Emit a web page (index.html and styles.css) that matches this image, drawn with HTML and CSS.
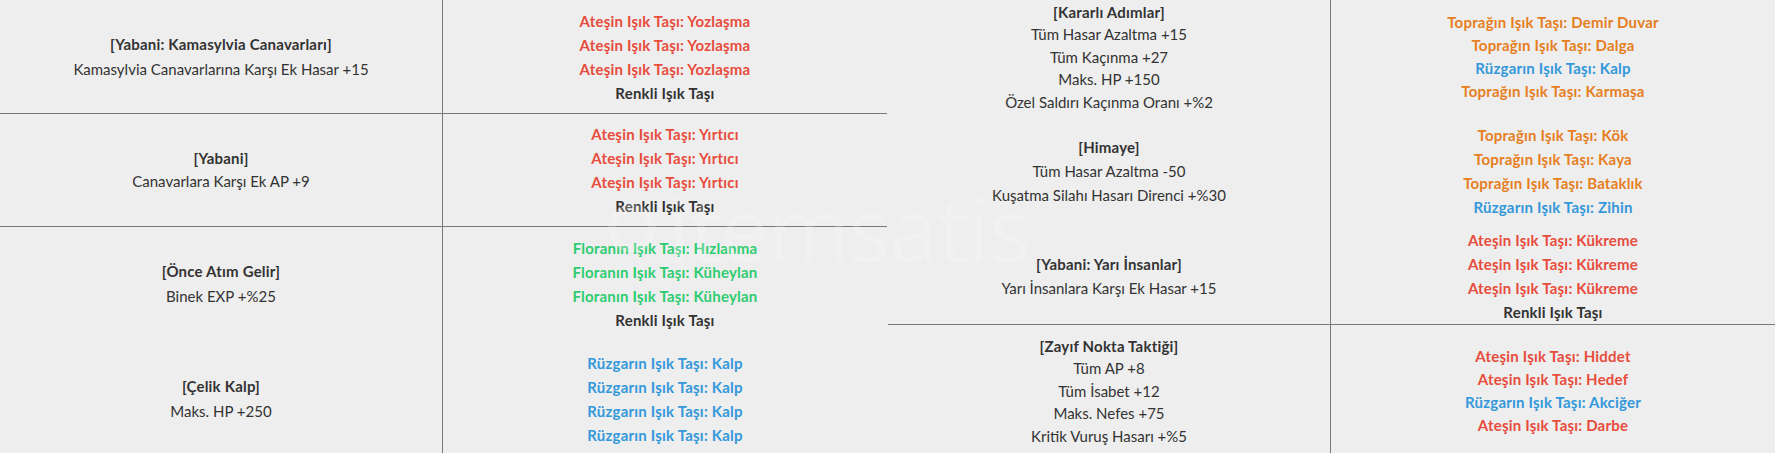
FILE: index.html
```html
<!DOCTYPE html>
<html lang="tr">
<head>
<meta charset="utf-8">
<title>Işık Taşı Kombinasyonları</title>
<link rel="stylesheet" href="styles.css">
</head>
<body>
<div class="page">
  <div class="table">
    <div class="row h114 line">
      <div class="cell c1 two">
        <div class="title">[Yabani: Kamasylvia Canavarları]</div>
        <div>Kamasylvia Canavarlarına Karşı Ek Hasar +15</div>
      </div>
      <div class="cell c2">
        <div class="red">Ateşin Işık Taşı: Yozlaşma</div>
        <div class="red">Ateşin Işık Taşı: Yozlaşma</div>
        <div class="red">Ateşin Işık Taşı: Yozlaşma</div>
        <div class="dark">Renkli Işık Taşı</div>
      </div>
    </div>
    <div class="row h113 line">
      <div class="cell c1 two tight">
        <div class="title">[Yabani]</div>
        <div>Canavarlara Karşı Ek AP +9</div>
      </div>
      <div class="cell c2">
        <div class="red">Ateşin Işık Taşı: Yırtıcı</div>
        <div class="red">Ateşin Işık Taşı: Yırtıcı</div>
        <div class="red">Ateşin Işık Taşı: Yırtıcı</div>
        <div class="dark">Renkli Işık Taşı</div>
      </div>
    </div>
    <div class="row h114">
      <div class="cell c1 two">
        <div class="title">[Önce Atım Gelir]</div>
        <div>Binek EXP +%25</div>
      </div>
      <div class="cell c2">
        <div class="green">Floranın Işık Taşı: Hızlanma</div>
        <div class="green">Floranın Işık Taşı: Küheylan</div>
        <div class="green">Floranın Işık Taşı: Küheylan</div>
        <div class="dark">Renkli Işık Taşı</div>
      </div>
    </div>
    <div class="row h116">
      <div class="cell c1 two">
        <div class="title">[Çelik Kalp]</div>
        <div>Maks. HP +250</div>
      </div>
      <div class="cell c2">
        <div class="blue">Rüzgarın Işık Taşı: Kalp</div>
        <div class="blue">Rüzgarın Işık Taşı: Kalp</div>
        <div class="blue">Rüzgarın Işık Taşı: Kalp</div>
        <div class="blue">Rüzgarın Işık Taşı: Kalp</div>
      </div>
    </div>
  </div>

  <div class="table">
    <div class="row h114">
      <div class="cell c1 lh22">
        <div class="title">[Kararlı Adımlar]</div>
        <div>Tüm Hasar Azaltma +15</div>
        <div>Tüm Kaçınma +27</div>
        <div>Maks. HP +150</div>
        <div>Özel Saldırı Kaçınma Oranı +%2</div>
      </div>
      <div class="cell c2 lh23">
        <div class="orange">Toprağın Işık Taşı: Demir Duvar</div>
        <div class="orange">Toprağın Işık Taşı: Dalga</div>
        <div class="blue">Rüzgarın Işık Taşı: Kalp</div>
        <div class="orange">Toprağın Işık Taşı: Karmaşa</div>
      </div>
    </div>
    <div class="row h114">
      <div class="cell c1">
        <div class="title">[Himaye]</div>
        <div>Tüm Hasar Azaltma -50</div>
        <div>Kuşatma Silahı Hasarı Direnci +%30</div>
      </div>
      <div class="cell c2">
        <div class="orange">Toprağın Işık Taşı: Kök</div>
        <div class="orange">Toprağın Işık Taşı: Kaya</div>
        <div class="orange">Toprağın Işık Taşı: Bataklık</div>
        <div class="blue">Rüzgarın Işık Taşı: Zihin</div>
      </div>
    </div>
    <div class="row h97 line">
      <div class="cell c1">
        <div class="title">[Yabani: Yarı İnsanlar]</div>
        <div>Yarı İnsanlara Karşı Ek Hasar +15</div>
      </div>
      <div class="cell c2">
        <div class="red">Ateşin Işık Taşı: Kükreme</div>
        <div class="red">Ateşin Işık Taşı: Kükreme</div>
        <div class="red">Ateşin Işık Taşı: Kükreme</div>
        <div class="dark">Renkli Işık Taşı</div>
      </div>
    </div>
    <div class="row h132">
      <div class="cell c1 lh22">
        <div class="title">[Zayıf Nokta Taktiği]</div>
        <div>Tüm AP +8</div>
        <div>Tüm İsabet +12</div>
        <div>Maks. Nefes +75</div>
        <div>Kritik Vuruş Hasarı +%5</div>
      </div>
      <div class="cell c2 lh23">
        <div class="red">Ateşin Işık Taşı: Hiddet</div>
        <div class="red">Ateşin Işık Taşı: Hedef</div>
        <div class="blue">Rüzgarın Işık Taşı: Akciğer</div>
        <div class="red">Ateşin Işık Taşı: Darbe</div>
      </div>
    </div>
  </div>

  <div class="watermark" aria-hidden="true">
    <svg class="wm-logo" width="52" height="52" viewBox="0 0 52 52"><circle cx="26" cy="26" r="20" fill="none" stroke="#fff" stroke-width="8"/></svg>
    <span class="wm-text">itemsatis</span>
  </div>
</div>
</body>
</html>
```

FILE: styles.css
```css
html, body {
  margin: 0;
  padding: 0;
  background: #eeeeee;
}

body {
  font-family: Lato, "Open Sans", "Liberation Sans", sans-serif;
  font-size: 15px;
  color: #333333;
  overflow: hidden;
}

.page {
  position: relative;
  display: flex;
  gap: 1px;
  height: 453px;
  overflow: hidden;
}

.table {
  width: 887px;
  display: flex;
  flex-direction: column;
  flex: none;
}

.row {
  display: flex;
  box-sizing: border-box;
  flex: none;
}

.row.line {
  border-bottom: 1px solid #777777;
}

.h114 { height: 114px; }
.h113 { height: 113px; }
.h116 { height: 116px; }
.h97 { height: 97px; }
.h132 { height: 132px; }

.cell {
  display: flex;
  flex-direction: column;
  justify-content: center;
  align-items: center;
  text-align: center;
  line-height: 24px;
  white-space: nowrap;
}

.c1 {
  width: 442px;
  border-right: 1px solid #777777;
  flex: none;
}

.c2 {
  flex: 1;
}

.two { line-height: 25px; }
.two.tight { line-height: 23px; }
.lh22 { line-height: 22.4px; }
.lh23 { line-height: 23px; }

.title {
  font-weight: 700;
  letter-spacing: 0.2px;
}

.red, .orange, .blue, .green, .dark {
  font-weight: 700;
  letter-spacing: 0.2px;
}

.red { color: #e74c3c; }
.orange { color: #e67e22; }
.blue { color: #3498db; }
.green { color: #2ecc71; }
.dark { color: #333333; }

.watermark {
  position: absolute;
  left: 606px;
  top: 168px;
  display: flex;
  align-items: center;
  gap: 10px;
  opacity: 0.22;
  pointer-events: none;
}

.wm-text {
  font-family: "Open Sans", Lato, sans-serif;
  font-size: 88px;
  font-weight: 400;
  color: #ffffff;
  letter-spacing: -1px;
}
```
